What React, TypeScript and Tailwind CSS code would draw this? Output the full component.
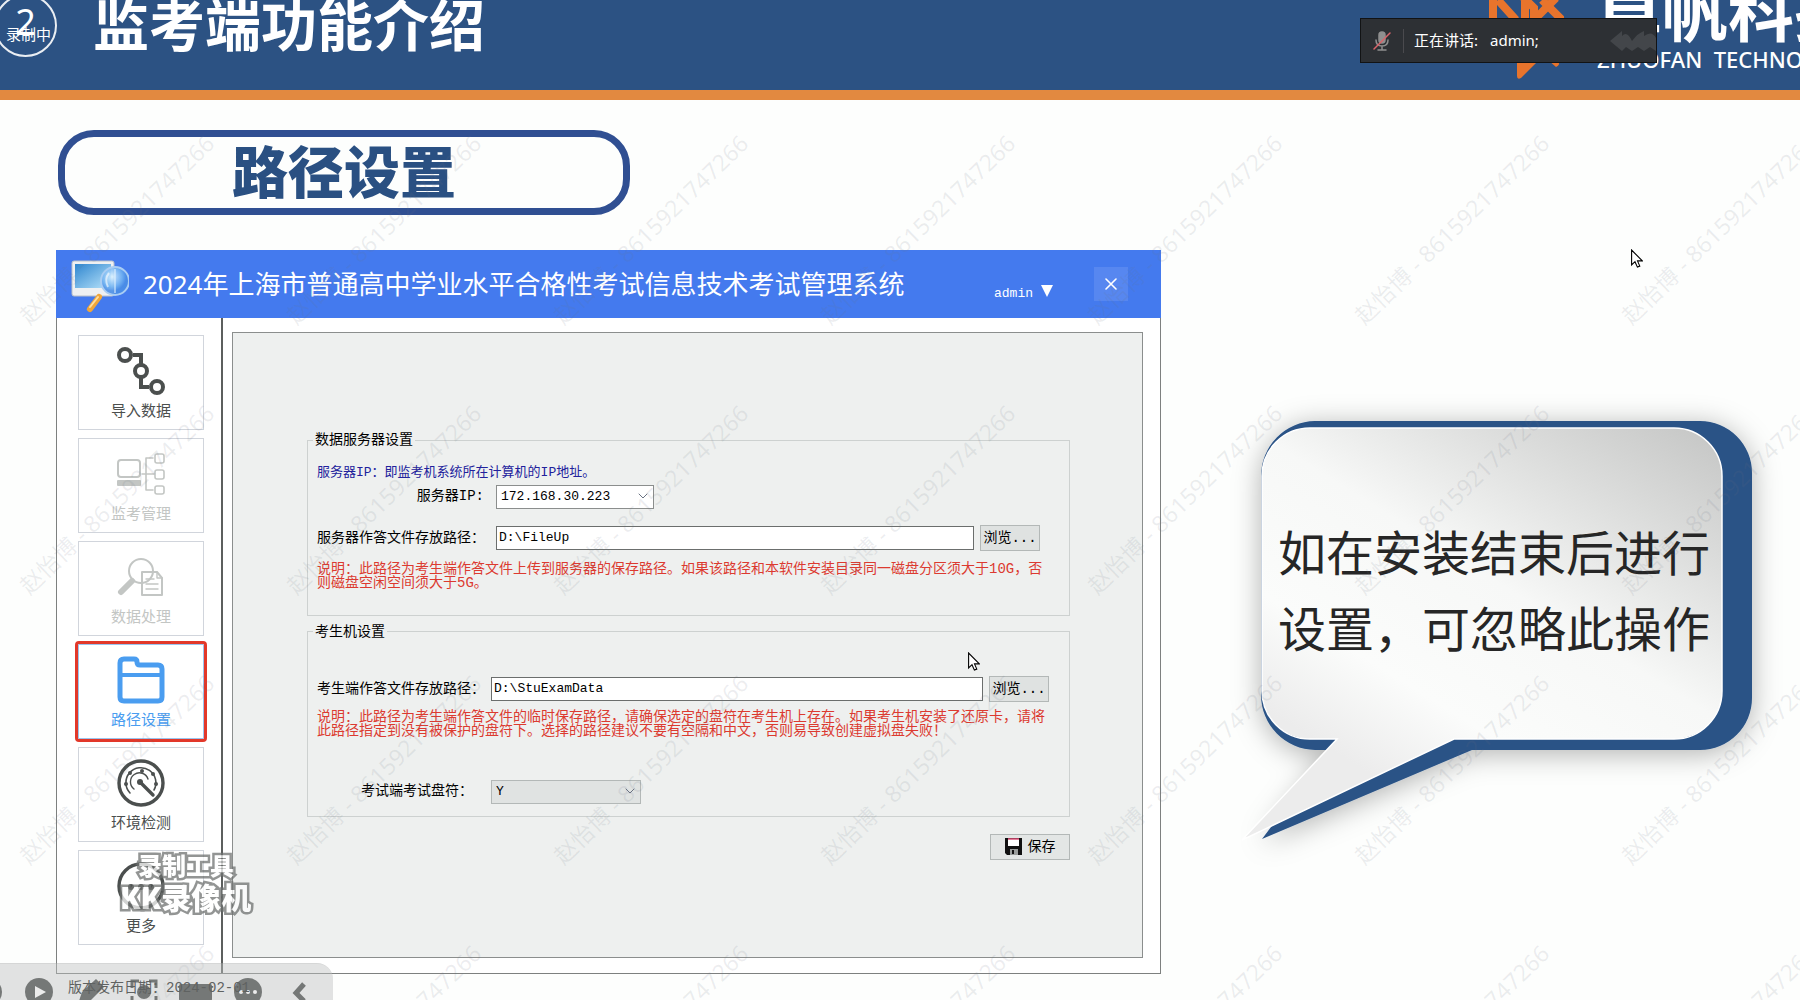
import React from "react";

const CJK = "font-['Noto_Sans','Noto_Sans_CJK_SC',sans-serif]";
const FORM = "font-['Liberation_Mono','Noto_Sans_CJK_SC',monospace]";

const stroke = {
  fill: "none",
  stroke: "currentColor",
  strokeLinecap: "round" as const,
  strokeLinejoin: "round" as const,
};

function NodesIcon() {
  return (
    <svg viewBox="0 0 48 48" className="size-12" {...stroke} strokeWidth={4}>
      <path d="M16 8h8v9M24 31v9h8" strokeLinecap="butt" strokeLinejoin="miter" />
      <circle cx="8" cy="8" r="6" />
      <circle cx="24" cy="24" r="6" />
      <circle cx="40" cy="40" r="6" />
    </svg>
  );
}

function NetworkIcon() {
  return (
    <svg viewBox="0 0 48 48" className="size-12" {...stroke} strokeWidth={1.6}>
      <rect x="1" y="10" width="22" height="17" rx="3" strokeWidth={2} />
      <rect x="0" y="30" width="24" height="6" rx="1" fill="currentColor" stroke="none" />
      <path d="M25 24h12M29 24V8h7M29 24v16h7" />
      <rect x="38" y="4" width="9" height="9" rx="2" />
      <rect x="38" y="20" width="9" height="9" rx="2" />
      <rect x="38" y="36" width="9" height="8" rx="2" />
    </svg>
  );
}

function SearchDocIcon() {
  return (
    <svg viewBox="0 0 48 48" className="size-12" {...stroke} strokeWidth={2}>
      <circle cx="24" cy="18" r="12" />
      <path d="M25 19h15l5 6v17H25z" />
      <path d="M40 19v6h5M29 26h8M29 31h12M29 36h12" strokeWidth={1.4} />
      <path d="M15 28 4 39" strokeWidth={6} />
      <path d="m16 27-3 3" strokeWidth={3} />
    </svg>
  );
}

function FolderIcon() {
  return (
    <svg viewBox="0 0 48 48" className="size-12" {...stroke} strokeWidth={5}>
      <path d="M3 7q0-4 4-4h10q3 0 3 3t3 3h18q4 0 4 4v28q0 4-4 4H7q-4 0-4-4z" />
      <path d="M3 19h42" strokeWidth={4} />
    </svg>
  );
}

function GaugeIcon() {
  return (
    <svg viewBox="0 0 48 48" className="size-12" {...stroke} strokeWidth={3.4}>
      <circle cx="24" cy="24" r="22" />
      <path d="M13 34a15 15 0 1 1 24-3" strokeWidth={1.6} />
      <path d="M17 30a9 9 0 1 1 14-10" strokeWidth={1.4} />
      <path d="m23 23 13 13" />
      <g fill="currentColor" stroke="none">
        <circle cx="23" cy="23" r="3" />
        <circle cx="9" cy="25" r="2" />
        <circle cx="13" cy="14" r="2" />
        <circle cx="25" cy="12" r="2" />
        <circle cx="36" cy="15" r="2" />
        <circle cx="39" cy="25" r="2" />
      </g>
    </svg>
  );
}

function MoreIcon() {
  return (
    <svg viewBox="0 0 48 48" className="size-12" {...stroke} strokeWidth={3.4}>
      <circle cx="24" cy="24" r="22" />
      <g fill="currentColor" stroke="none">
        <circle cx="14" cy="25" r="3" />
        <circle cx="24" cy="25" r="3" />
        <circle cx="34" cy="25" r="3" />
      </g>
    </svg>
  );
}

const NAV = [
  { label: "导入数据", icon: <NodesIcon />, look: "border-gray-300 text-[#4b4f4e]" },
  { label: "监考管理", icon: <NetworkIcon />, look: "border-gray-300 text-[#c3c6c4]" },
  { label: "数据处理", icon: <SearchDocIcon />, look: "border-gray-300 text-[#c3c6c4]" },
  {
    label: "路径设置",
    icon: <FolderIcon />,
    look: "border-[#9cc4ee] text-[#4a9df0] outline-3 outline-[#e2382a] rounded-[1px]",
  },
  { label: "环境检测", icon: <GaugeIcon />, look: "border-gray-300 text-[#4b4f4e]" },
  { label: "更多", icon: <MoreIcon />, look: "border-gray-300 text-[#4b4f4e]" },
];

function Chevron() {
  return (
    <svg
      viewBox="0 0 10 6"
      className="pointer-events-none absolute right-1.5 top-1/2 h-1.5 w-2.5 -translate-y-1/2 text-gray-500"
      {...stroke}
    >
      <path d="m1 1 4 4 4-4" />
    </svg>
  );
}

function Cursor({ place }: { place: string }) {
  return (
    <svg viewBox="0 0 12 19" className={`pointer-events-none absolute h-[19px] w-3 ${place}`}>
      <path d="M.6 1v15l3.4-3.3 2.4 5.4 2.4-1-2.3-5.2h4.8z" fill="#fff" stroke="#000" strokeWidth="1.1" />
    </svg>
  );
}

function AppLogo() {
  return (
    <svg viewBox="0 0 58 54" className="h-[54px] w-[58px]">
      <defs>
        <linearGradient id="screen" x1="0" y1="0" x2="1" y2="1">
          <stop offset="0" stopColor="#2f86cf" />
          <stop offset="1" stopColor="#b9e4fb" />
        </linearGradient>
        <radialGradient id="lens" cx="40%" cy="35%">
          <stop offset="0" stopColor="#d8f0ff" />
          <stop offset="0.7" stopColor="#73b4f2" />
          <stop offset="1" stopColor="#4a8ee6" />
        </radialGradient>
      </defs>
      <rect x="1" y="2" width="42" height="35" rx="2" fill="#eef0f2" stroke="#b9bfc8" />
      <rect x="4" y="5" width="36" height="24" fill="url(#screen)" />
      <path d="m28 38-9 12" stroke="#f0a63a" strokeWidth="6" strokeLinecap="round" />
      <path d="m27 38-8 10" stroke="#ffe0a0" strokeWidth="2" strokeLinecap="round" />
      <circle cx="44" cy="22" r="14" fill="url(#lens)" fillOpacity="0.9" stroke="#a9cdf3" strokeWidth="2" />
      <path d="M44 10v24" stroke="#e4f4ff" strokeWidth="1.5" opacity="0.7" />
      <path d="M38 14q-5 6-1 14" fill="none" stroke="#fff" strokeWidth="2" opacity="0.6" />
    </svg>
  );
}

function Header() {
  return (
    <header className="relative h-[100px] overflow-hidden border-b-[10px] border-[#e28940] bg-[#2c5283] text-white">
      <div className="absolute -left-1.5 -top-1.5 flex size-[63px] items-center justify-center rounded-full border-2 border-white/90 text-[36px] leading-none">
        <span className="-mt-2">2</span>
      </div>
      <span className="absolute left-1.5 top-6 text-[15px] leading-5">录制中</span>
      <h1 className="absolute left-[93px] -top-3 text-[56px] font-bold leading-[72px]">监考端功能介绍</h1>

      <svg viewBox="0 0 76 80" className="absolute right-[236px] top-0 h-20 w-[76px]">
        <g fill="none" stroke="#e8742c" strokeWidth="8">
          <path d="M5 0v18M10 0 28 20M37 0v20M46 20V8L34-4M74 20 54 0M46 20 68-2" />
        </g>
        <path d="M29 60h22L33 78q-4 2-4-2z" fill="#e8742c" />
        <path d="m60 60 10 0q3 5-2 7z" fill="#e8742c" />
      </svg>
      <div className="absolute -top-8 left-[calc(100%-204px)] whitespace-nowrap text-[66px] font-bold leading-[84px]">
        卓帆科技
      </div>
      <div className="absolute left-[calc(100%-203px)] top-[45px] whitespace-pre text-[22px] font-medium leading-7">
        ZHUOFAN  TECHNOLOGY
      </div>

      <div className="absolute left-[calc(100%-440px)] top-[18px] flex h-[45px] w-[297px] items-center border border-black/60 bg-[#2d3034] text-[15px]">
        <svg viewBox="0 0 18 20" className="ml-3 h-5 w-[18px] text-[#8f8f8f]" {...stroke} strokeWidth={1.5}>
          <rect x="6" y="1" width="6" height="11" rx="3" fill="currentColor" />
          <path d="M3 9q0 6 6 6t6-6M9 15v3M5 19h8" />
          <path d="M1 18 17 2" stroke="#d9646a" />
        </svg>
        <span className="ml-3 h-6 w-px bg-[#4a4a4e]" />
        <span className="ml-2.5">正在讲话:</span>
        <span className="ml-3">admin;</span>
        <svg viewBox="0 0 46 24" className="ml-auto h-6 w-[46px]">
          <path d="M0 12 12 2v5q5-6 10 5Q28 4 34 2v5q8-6 12 2v13l-6-4-6 4-6-4-6 4-6-4-4 4z" fill="#43464a" />
        </svg>
      </div>
    </header>
  );
}

function Sidebar() {
  return (
    <nav className="flex w-[166px] shrink-0 flex-col gap-2 border-r-2 border-[#5c5f5e] pb-7 pl-[21px] pt-[17px]">
      {NAV.map((item) => (
        <button
          key={item.label}
          type="button"
          className={`flex h-[95px] w-[126px] flex-col items-center gap-[5px] border pt-[11px] text-[15px] leading-5 ${item.look}`}
        >
          {item.icon}
          {item.label}
        </button>
      ))}
    </nav>
  );
}

const fieldset = "border border-[#cdd1d0] pl-[9px]";
const legend = "-ml-1 px-0.5 text-sm leading-4";
const textbox = "h-6 min-w-0 flex-1 border border-[#6b6e6d] bg-white px-0.5 text-[13px]";
const browse = "h-[26px] w-[60px] border border-[#b3b8b7] bg-[#dfe2e1] text-sm leading-5";
const note = "whitespace-nowrap text-sm leading-[14px] text-[#dc3a30]";

function Settings() {
  return (
    <form
      className={`flex flex-1 flex-col border border-[#8b8e8d] bg-[#eef0ef] pl-[74px] pr-[72px] pt-[99px] text-black ${FORM}`}
    >
      <fieldset className={`${fieldset} pb-[25px]`}>
        <legend className={legend}>数据服务器设置</legend>
        <p className="mt-[15px] text-[13px] leading-5 text-[#21219c]">服务器IP：即监考机系统所在计算机的IP地址。</p>
        <div className="mt-px flex items-center">
          <label htmlFor="ip" className="w-[179px] pr-3 text-right text-sm">
            服务器IP:
          </label>
          <div className="relative">
            <select id="ip" className="h-6 w-[158px] appearance-none border border-[#8b8e8d] bg-white px-1 text-[13px]">
              <option>172.168.30.223</option>
            </select>
            <Chevron />
          </div>
        </div>
        <div className="mr-[29px] mt-4 flex items-center">
          <label htmlFor="server-path" className="w-[179px] text-sm">
            服务器作答文件存放路径：
          </label>
          <input id="server-path" defaultValue="D:\FileUp" className={textbox} />
          <button type="button" className={`ml-1.5 ${browse}`}>
            浏览...
          </button>
        </div>
        <p className={`mt-[11px] ${note}`}>
          说明：此路径为考生端作答文件上传到服务器的保存路径。如果该路径和本软件安装目录同一磁盘分区须大于10G，否
          <br />
          则磁盘空闲空间须大于5G。
        </p>
      </fieldset>

      <fieldset className={`mt-2 ${fieldset} pb-3`}>
        <legend className={legend}>考生机设置</legend>
        <div className="mr-5 mt-9 flex items-center">
          <label htmlFor="student-path" className="w-[174px] text-sm">
            考生端作答文件存放路径：
          </label>
          <input id="student-path" defaultValue="D:\StuExamData" className={textbox} />
          <button type="button" className={`ml-1.5 ${browse}`}>
            浏览...
          </button>
        </div>
        <p className={`mt-2 ${note}`}>
          说明：此路径为考生端作答文件的临时保存路径，请确保选定的盘符在考生机上存在。如果考生机安装了还原卡，请将
          <br />
          此路径指定到没有被保护的盘符下。选择的路径建议不要有空隔和中文，否则易导致创建虚拟盘失败！
        </p>
        <div className="mt-[41px] flex items-center">
          <label htmlFor="drive" className="w-[174px] pr-[18px] text-right text-sm">
            考试端考试盘符：
          </label>
          <div className="relative">
            <select id="drive" className="h-6 w-[150px] appearance-none border border-[#b3b8b7] bg-[#e0e3e2] px-1 text-[13px]">
              <option>Y</option>
            </select>
            <Chevron />
          </div>
        </div>
      </fieldset>

      <button
        type="button"
        className="mt-[17px] flex h-[26px] w-20 items-center justify-center gap-1.5 self-end border border-[#b3b8b7] bg-[#e3e6e5] text-sm leading-5"
      >
        <svg viewBox="0 0 17 17" className="size-[17px]">
          <path d="M0 0h17v17H2l-2-2z" fill="#111" />
          <path d="M3 1h11v7H3z" fill="#fff" />
          <path d="M3 1h11" stroke="#e0507a" strokeWidth="1.5" />
          <path d="M5 11h8v6H5z" fill="#9a9d9c" />
          <path d="M7 12h2v4H7z" fill="#111" />
        </svg>
        保存
      </button>
    </form>
  );
}

function ExamWindow() {
  return (
    <section className="mt-[35px] border border-t-0 border-[#7d807f] bg-white">
      <div className="-mx-px flex h-[68px] items-center bg-[#447aee] text-white">
        <div className="ml-[15px] mt-1">
          <AppLogo />
        </div>
        <h3 className="ml-[14px] whitespace-nowrap text-[26px] leading-9">
          2024年上海市普通高中学业水平合格性考试信息技术考试管理系统
        </h3>
        <button type="button" className={`ml-auto mt-5 flex items-center gap-2 text-[13px] leading-5 ${FORM}`}>
          admin
          <svg viewBox="0 0 12 12" className="mb-1.5 size-3">
            <path d="M0 0h12L6 12z" fill="#fff" />
          </svg>
        </button>
        <button
          type="button"
          aria-label="关闭"
          className="ml-[41px] mr-[33px] flex size-[34px] items-center justify-center bg-white/10"
        >
          <svg viewBox="0 0 12 12" className="size-3" {...stroke} strokeWidth={1.6}>
            <path d="m1 1 10 10M11 1 1 11" />
          </svg>
        </button>
      </div>
      <div className="flex">
        <Sidebar />
        <div className="flex flex-1 pb-[15px] pl-[9px] pr-[17px] pt-3.5">
          <Settings />
        </div>
      </div>
    </section>
  );
}

function Bubble() {
  return (
    <aside className="relative mt-[300px] h-[460px] w-[530px]">
      <svg viewBox="0 0 530 460" className="absolute inset-0 size-full overflow-visible">
        <defs>
          <linearGradient id="paper" x1="1" y1="0" x2="0.35" y2="0.9">
            <stop offset="0" stopColor="#c4c5c4" />
            <stop offset="0.25" stopColor="#dcdddc" />
            <stop offset="0.52" stopColor="#f7f8f7" />
            <stop offset="0.8" stopColor="#fbfcfb" />
            <stop offset="1" stopColor="#ececec" />
          </linearGradient>
          <filter id="shade" x="-10%" y="-10%" width="120%" height="125%">
            <feDropShadow dx="0" dy="4" stdDeviation="14" floodColor="#000" floodOpacity="0.3" />
          </filter>
        </defs>
        <path
          filter="url(#shade)"
          fill="#2a5386"
          d="M77 21H462a52 52 0 0 1 52 52V298a52 52 0 0 1-52 52H234L24 439 91 350H77a55 55 0 0 1-54-55V76a55 55 0 0 1 54-55z"
        />
        <path
          fill="url(#paper)"
          stroke="#fff"
          strokeWidth="1.5"
          d="M72 28H436a48 48 0 0 1 48 48V291a48 48 0 0 1-48 48H216L4 440 99 339H72a48 48 0 0 1-48-48V76a48 48 0 0 1 48-48z"
        />
      </svg>
      <p className="relative whitespace-nowrap pl-10 pt-[115px] text-[48px] leading-[76px] text-[#262626]">
        如在安装结束后进行
        <br />
        设置，可忽略此操作
      </p>
    </aside>
  );
}

function Watermarks() {
  return (
    <div
      aria-hidden="true"
      className="pointer-events-none absolute -left-[284px] top-[94px] grid h-[calc(100%-94px)] w-[2136px] auto-rows-[270px] grid-cols-8 overflow-hidden"
    >
      {Array.from({ length: 32 }, (_, i) => (
        <div key={i} className="flex items-center justify-center">
          <span className="-rotate-44 whitespace-nowrap text-[23px] text-gray-500/12">赵怡博 - 8615921747266</span>
        </div>
      ))}
    </div>
  );
}

function RecorderMark() {
  return (
    <div className="pointer-events-none absolute left-[120px] top-[850px] font-black text-white opacity-75 [-webkit-text-stroke:5px_#6f7271] [paint-order:stroke_fill]">
      <div className="pl-[18px] text-2xl leading-8">录制工具</div>
      <div className="text-[30px] leading-8">KK录像机</div>
    </div>
  );
}

function SlideBar() {
  return (
    <div className="absolute left-0 top-[963px] flex h-[37px] w-[333px] items-start overflow-hidden rounded-tr-2xl border-t border-black/5 bg-[#bfc2c1]/45 text-[#757877]">
      <svg viewBox="0 0 333 37" className="h-[37px] w-[333px] shrink-0">
        <g fill="currentColor">
          <circle cx="-12" cy="28" r="14" />
          <circle cx="39" cy="28" r="14" />
          <path d="m79 37 3-9 14-13 8 8-14 14z" />
          <rect x="179" y="20" width="33" height="17" rx="2" />
          <circle cx="248" cy="28" r="14" />
          <circle cx="144" cy="28" r="7" />
        </g>
        <path d="M35 22v12l11-6z" fill="#ececec" />
        <g fill="#ececec">
          <circle cx="241" cy="28" r="2" />
          <circle cx="248" cy="28" r="2" />
          <circle cx="255" cy="28" r="2" />
        </g>
        <path d="M132 24v-7h7M149 17h7v7M132 32v6M156 32v6" fill="none" stroke="currentColor" strokeWidth="3" />
        <path d="m304 20-8 9 8 8" fill="none" stroke="currentColor" strokeWidth="5" />
      </svg>
    </div>
  );
}

export default function App() {
  return (
    <div className={`relative min-h-screen overflow-hidden bg-[#fdfefd] ${CJK}`}>
      <Header />
      <main className="flex pl-14">
        <div className="min-w-0 flex-1 pt-[30px]">
          <h2 className="ml-0.5 flex h-[85px] w-[572px] items-center justify-center rounded-[36px] border-[7px] border-[#304f92] pb-1 text-[56px] font-black leading-none text-[#2a5082]">
            路径设置
          </h2>
          <ExamWindow />
          <p className={`relative z-10 mt-1 pl-3 text-sm leading-5 text-[#5f6261] ${FORM}`}>版本发布日期：2024-02-01</p>
        </div>
        <div className="ml-[77px] w-[562px] shrink-0">
          <Bubble />
        </div>
      </main>
      <Watermarks />
      <RecorderMark />
      <SlideBar />
      <Cursor place="left-[968px] top-[652px]" />
      <Cursor place="left-[1631px] top-[249px]" />
    </div>
  );
}
